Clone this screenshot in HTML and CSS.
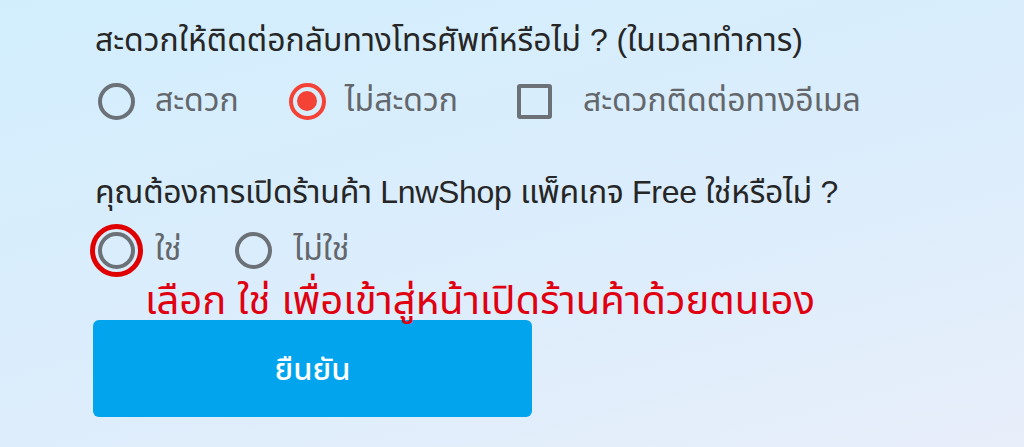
FILE: index.html
```html
<!DOCTYPE html>
<html lang="th">
<head>
    <meta charset="UTF-8">
    <meta name="viewport" content="width=device-width, initial-scale=1.0">
    <title>แบบสอบถาม</title>
    <link rel="stylesheet" href="styles.css">
</head>
<body>
    <form class="survey">
        <div class="question">สะดวกให้ติดต่อกลับทางโทรศัพท์หรือไม่ ? (ในเวลาทำการ)</div>
        <div class="options first">
            <label class="option opt-a"><span class="radio"></span>สะดวก</label>
            <label class="option opt-b"><span class="radio checked"></span>ไม่สะดวก</label>
            <label class="option opt-c"><span class="checkbox"></span>สะดวกติดต่อทางอีเมล</label>
        </div>

        <div class="question second">คุณต้องการเปิดร้านค้า LnwShop แพ็คเกจ Free ใช่หรือไม่ ?</div>
        <div class="options">
            <label class="option yes"><span class="radio"><span class="highlight"></span></span>ใช่</label>
            <label class="option no"><span class="radio"></span>ไม่ใช่</label>
        </div>
        <div class="note">เลือก ใช่ เพื่อเข้าสู่หน้าเปิดร้านค้าด้วยตนเอง</div>

        <button type="submit">ยืนยัน</button>
    </form>
</body>
</html>
```

FILE: styles.css
```css
body {
    font-family: "Liberation Sans", "Noto Sans Thai", "Noto Sans", sans-serif;
    background: linear-gradient(165deg, #d2eefd 0%, #dcedfc 55%, #e8eefa 100%);
    margin: 0;
    height: 447px;
    overflow: hidden;
}

.survey {
    padding: 18px 0 0 95px;
}

.question {
    font-size: 32px;
    color: #262626;
    line-height: 44px;
    white-space: nowrap;
}

.question.second {
    margin-top: 37px;
    letter-spacing: -0.3px;
}

.options {
    display: flex;
    align-items: center;
    height: 64px;
    padding-left: 3px;
    margin-top: 4px;
}

.options.first {
    margin-top: 7px;
}

.option {
    display: flex;
    align-items: center;
    gap: 20px;
    font-size: 32px;
    color: #63676b;
    white-space: nowrap;
}

.opt-a { margin-right: 50px; }
.opt-b { gap: 19px; margin-right: 59px; }
.yes { margin-right: 54px; }
.no { gap: 21px; }

.radio {
    position: relative;
    width: 37px;
    height: 37px;
    border: 4px solid #6c7177;
    border-radius: 50%;
    box-sizing: border-box;
    flex-shrink: 0;
}

.radio.checked {
    border-color: #f44336;
}

.radio.checked::after {
    content: "";
    position: absolute;
    left: 4.5px;
    top: 4.5px;
    width: 20px;
    height: 20px;
    border-radius: 50%;
    background: #f44336;
}

.highlight {
    position: absolute;
    left: -12px;
    top: -12px;
    width: 53px;
    height: 53px;
    border: 5px solid #e00000;
    border-radius: 50%;
    box-sizing: border-box;
}

.checkbox {
    width: 35px;
    height: 35px;
    border: 4px solid #6c7177;
    border-radius: 3px;
    box-sizing: border-box;
    margin-right: 11px;
}

.note {
    font-size: 40px;
    color: #e00010;
    line-height: 40px;
    margin: -2px 0 0 50px;
    white-space: nowrap;
}

button {
    display: block;
    width: 439px;
    height: 97px;
    margin: 0 0 0 -2px;
    background-color: #03a4ee;
    color: white;
    border: none;
    border-radius: 6px;
    font-family: inherit;
    font-size: 31px;
    font-weight: 500;
    padding-top: 4px;
}
```
